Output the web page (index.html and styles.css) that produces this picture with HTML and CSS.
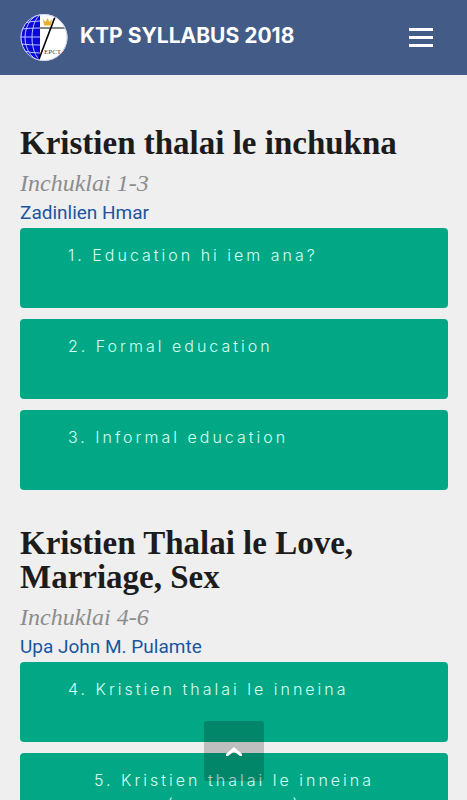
FILE: index.html
```html
<!DOCTYPE html>
<html lang="lus">
<head>
<meta charset="utf-8">
<meta name="viewport" content="width=device-width, initial-scale=1">
<title>KTP SYLLABUS 2018</title>
<link rel="stylesheet" href="styles.css">
</head>
<body>
<header class="navbar">
  <a class="brand" href="#top">
    <svg class="logo" viewBox="0 0 48 48" aria-hidden="true">
      <defs>
        <clipPath id="disc"><circle cx="24" cy="23.500" r="23.500"/></clipPath>
        <clipPath id="globe"><path d="M0 0H20V48H0Z"/></clipPath>
      </defs>
      <g clip-path="url(#disc)">
        <path d="M0 0H48V48H0Z" fill="#fff"/>
        <g clip-path="url(#globe)">
          <path d="M0 0H20V48H0Z" fill="#0b08dc"/>
          <g fill="none" stroke="#b9c4ff" stroke-width="1">
            <ellipse cx="24" cy="23.500" rx="19" ry="24"/>
            <ellipse cx="24" cy="23.500" rx="12" ry="24"/>
            <path d="M4 9Q12 7 20 7M1 15Q10 14 20 14M0 23H20M1 30Q10 31 20 31M4 37Q12 39 20 39"/>
          </g>
        </g>
        <path d="M20 14H48" stroke="#858585" stroke-width="2"/>
        <path d="M35 3L19 45" stroke="#000" stroke-width="1.600"/>
        <path d="M23 5l2.500 3L27.500 4l2 4L32 5l-1 6.500H24Z" fill="#e8ae32"/>
      </g>
      <circle cx="24" cy="23.500" r="23" fill="none" stroke="#c9d2ee" stroke-width="1"/>
      <text class="logo-text" x="24" y="40">EPCT</text>
    </svg>
    <span class="brand-name">KTP SYLLABUS 2018</span>
  </a>
  <button class="menu" type="button" aria-label="Menu"><span></span><span></span><span></span></button>
</header>
<main class="content" id="top">
  <section class="group">
    <h2 class="title">Kristien thalai le inchukna</h2>
    <p class="range">Inchuklai 1-3</p>
    <p class="author">Zadinlien Hmar</p>
    <div class="lessons">
      <a class="lesson" href="#l1">1. Education hi iem ana?</a>
      <a class="lesson" href="#l2">2. Formal education</a>
      <a class="lesson" href="#l3">3. Informal education</a>
    </div>
  </section>
  <section class="group">
    <h2 class="title">Kristien Thalai le Love, Marriage, Sex</h2>
    <p class="range">Inchuklai 4-6</p>
    <p class="author">Upa John M. Pulamte</p>
    <div class="lessons">
      <a class="lesson" href="#l4">4. Kristien thalai le inneina</a>
      <a class="lesson centered" href="#l5">5. Kristien thalai le inneina<br>(sunzawmna)</a>
    </div>
  </section>
</main>
<a class="to-top" href="#top" aria-label="Back to top">
  <svg viewBox="0 0 16 9" aria-hidden="true"><path d="M0 7L8 0L16 7V9H14L8 4.500L2 9H0Z" fill="#fff"/></svg>
</a>
</body>
</html>
```
FILE: styles.css
```css
* { box-sizing: border-box; }
body {
  margin: 0;
  background: #efefef;
  font-family: "Inter", sans-serif;
  overflow-x: hidden;
  scrollbar-width: none;
}
.navbar {
  display: flex;
  align-items: center;
  justify-content: space-between;
  height: 75px;
  padding: 0 34px 0 20px;
  background: #435c87;
}
.brand {
  display: flex;
  align-items: center;
  gap: 12px;
  color: #fff;
  text-decoration: none;
}
.logo { width: 48px; height: 48px; }
.logo-text { font: 7px "Liberation Serif", serif; fill: #34406f; }
.brand-name { font-size: 21px; font-weight: 700; line-height: 24px; padding-bottom: 4px; }
.menu {
  display: flex;
  flex-direction: column;
  gap: 5px;
  padding: 0;
  border: 0;
  background: none;
}
.menu span { width: 24px; height: 3px; background: #fff; }
.content { padding: 51px 19px 0 20px; }
.group { margin-bottom: 36px; }
.title {
  margin: 0;
  font: 700 33px/34px "Liberation Serif", serif;
  color: #1c1c1c;
}
.range {
  margin: 8px 0 0;
  font: italic 24px/30px "Liberation Serif", serif;
  color: #8c8c8c;
}
.author {
  margin: 0;
  font: 400 19px/30px "Roboto", sans-serif;
  color: #1a559f;
}
.lessons { display: flex; flex-direction: column; gap: 11px; }
.lesson {
  min-height: 80px;
  padding: 15px 48px;
  border-radius: 4px;
  background: #02a885;
  color: #d5fff4;
  font-size: 16px;
  font-weight: 300;
  line-height: 24px;
  letter-spacing: 3px;
  text-decoration: none;
}
.centered { padding: 15px 20px; text-align: center; }
.to-top {
  position: fixed;
  bottom: 19px;
  left: 50%;
  display: flex;
  align-items: center;
  justify-content: center;
  width: 60px;
  height: 60px;
  margin-left: -30px;
  border-radius: 3px;
  background: rgba(0, 0, 0, 0.2);
}
.to-top svg { width: 16px; height: 9px; }
```
